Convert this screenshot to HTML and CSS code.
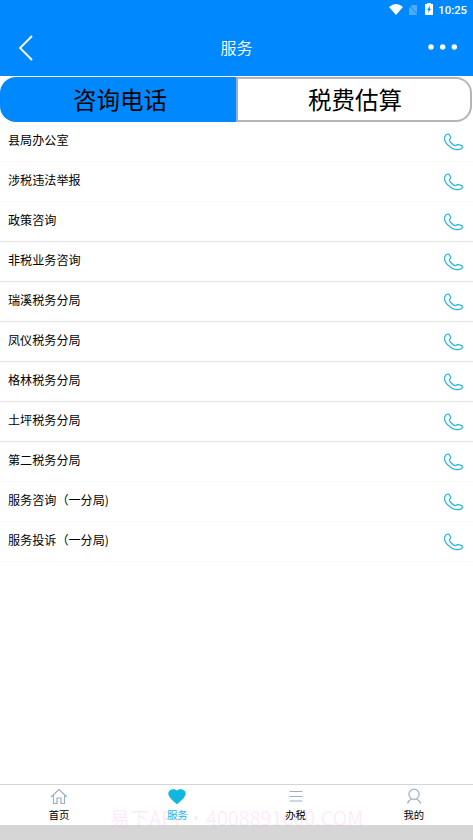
FILE: index.html
```html
<!DOCTYPE html>
<html lang="zh-CN">
<head>
<meta charset="utf-8">
<title>服务</title>
<link rel="stylesheet" href="styles.css">
</head>
<body>
<svg class="defs" width="0" height="0"><symbol id="phone" viewBox="0 0 20 18"><path d="M4.300 1.200C2.700 1.200 1 2.800 1 5.400C1 9.600 7.500 16.600 13.600 16.700C16.800 16.800 18.900 15.600 19.200 14.200C19.300 13.500 18.700 13 17.900 12.600L15.200 11.600C13.800 11.200 13.400 12 12.600 12.500C11.800 12.900 11 12.500 10.100 11.900C8.500 10.900 7.200 9.600 6.200 8.100C5.600 7.200 5.800 6.700 6.500 6.100C7.300 5.500 7.400 4.700 6.900 3.700L5.900 1.900C5.500 1.300 5 1.100 4.300 1.200Z"/></symbol></svg>
<header class="header">
  <div class="status">
    <svg class="wifi" viewBox="0 0 14 11"><path d="M0 3Q7-3 14 3L7 11Z"/></svg>
    <svg class="sim" viewBox="0 0 10 11"><path d="M4 1H9V11H1V4Z"/><path class="slash" d="M0 0L10 11"/></svg>
    <svg class="battery" viewBox="0 0 8 12"><path d="M0 1H2V0H6V1H8V12H0Z"/><path class="bolt" d="M5 2.500L2 7H3.600L3 10L6 5.800H4.500Z"/></svg>
    <span class="time">10:25</span>
  </div>
  <div class="titlebar">
    <svg class="back" viewBox="0 0 14 26"><path d="M13 1L1 13L13 25"/></svg>
    <h1>服务</h1>
    <svg class="more" viewBox="0 0 30 6"><circle cx="3" cy="3" r="2.700"/><circle cx="14.700" cy="3" r="2.700"/><circle cx="26.300" cy="3" r="2.700"/></svg>
  </div>
</header>
<nav class="segments"><div class="segment active">咨询电话</div><div class="segment">税费估算</div></nav>
<main class="list">
  <div class="row light"><span>县局办公室</span><svg><use href="#phone"/></svg></div>
  <div class="row light"><span>涉税违法举报</span><svg><use href="#phone"/></svg></div>
  <div class="row"><span>政策咨询</span><svg><use href="#phone"/></svg></div>
  <div class="row"><span>非税业务咨询</span><svg><use href="#phone"/></svg></div>
  <div class="row"><span>瑞溪税务分局</span><svg><use href="#phone"/></svg></div>
  <div class="row"><span>凤仪税务分局</span><svg><use href="#phone"/></svg></div>
  <div class="row"><span>格林税务分局</span><svg><use href="#phone"/></svg></div>
  <div class="row"><span>土坪税务分局</span><svg><use href="#phone"/></svg></div>
  <div class="row light"><span>第二税务分局</span><svg><use href="#phone"/></svg></div>
  <div class="row light"><span>服务咨询（一分局)</span><svg><use href="#phone"/></svg></div>
  <div class="row light"><span>服务投诉（一分局)</span><svg><use href="#phone"/></svg></div>
</main>
<footer class="tabs">
  <div class="watermark">易下APP・4008891600.COM</div>
  <div class="tab"><svg viewBox="0 0 18 18"><path d="M1 9L9 1.500L17 9M3.500 7.500V15.500H7V10H11V15.500H14.500V7.500"/></svg><span>首页</span></div>
  <div class="tab selected"><svg viewBox="0 0 18 18"><path d="M9 16.200C7 14.600 .5 9.800 .3 5.800C.1 1.500 6-.3 9 2.600C12-.3 17.900 1.500 17.700 5.800C17.500 9.800 11 14.600 9 16.200Z"/></svg><span>服务</span></div>
  <div class="tab"><svg viewBox="0 0 18 18"><path d="M2.500 3.500H15.500M2.500 8.500H15.500M2.500 13H15.500"/></svg><span>办税</span></div>
  <div class="tab"><svg viewBox="0 0 18 18"><circle cx="9" cy="6.300" r="5.100"/><path d="M2.500 15.500Q3.500 12.500 6.500 11M15.500 15.500Q14.500 12.500 11.500 11"/></svg><span>我的</span></div>
</footer>
<div class="bottom"></div>
</body>
</html>
```
FILE: styles.css
```css
* { box-sizing: border-box; }
body {
  margin: 0;
  height: 840px;
  display: flex;
  flex-direction: column;
  overflow: hidden;
  background: #fff;
  color: #000;
  font-family: "Noto Sans CJK SC", sans-serif;
}
svg { display: block; fill: none; }
.defs { position: absolute; }
.header { height: 76px; background: #0089ff; color: #fff; }
.status { height: 19px; padding-right: 6px; display: flex; justify-content: flex-end; align-items: center; }
.status svg { fill: #fff; }
.wifi { width: 14px; height: 11px; margin-right: 5px; }
.sim { width: 10px; height: 11px; margin-right: 7px; opacity: .3; }
.sim .slash { stroke: #0089ff; }
.battery { width: 8px; height: 12px; margin-right: 5px; margin-top: -1px; }
.battery .bolt { fill: #0089ff; }
.time { font: 500 11.3px/19px Roboto, sans-serif; margin-top: 1px; }
.titlebar { height: 57px; padding: 0 15px 0 19px; display: grid; grid-template-columns: 30px 1fr 34px; align-items: center; }
.back { width: 14px; height: 26px; stroke: #fff; stroke-width: 1.9; }
.more { width: 30px; height: 6px; margin-left: 4px; margin-top: -2px; fill: #fff; }
h1 { margin: -2px 0 0; font-size: 16px; line-height: 24px; font-weight: 350; text-align: center; }
.segments { height: 46px; margin-top: 1px; padding: 0 1px 1px 0; display: flex; }
.segment { width: 234px; padding-left: 2px; border: 2px solid #b5b5b9; border-left-width: 0; border-radius: 0 16px 16px 0; font-size: 23.500px; line-height: 41px; text-align: center; }
.segment.active { width: 238px; padding-left: 4px; background: #0089ff; border: 0; border-right: 2px solid #9aaec8; border-radius: 16px 0 0 16px; line-height: 45px; }
.list { flex: 1; margin-top: -1px; }
.row { height: 40px; padding: 0 9px 0 8px; border-bottom: 1px solid #e4e4e4; display: flex; align-items: center; justify-content: space-between; font-size: 12.100px; line-height: 18px; }
.row.light { border-color: #f8f8f8; }
.row span { margin-top: -3px; }
.row svg { width: 21px; height: 18px; margin-top: 0; stroke: #30b7dc; stroke-width: 1.3; }
.tabs { position: relative; height: 41px; border-top: 1px solid #d5d5d5; display: flex; }
.tab { position: relative; flex: 1; display: flex; flex-direction: column; align-items: center; padding-top: 3px; font-size: 10.300px; line-height: 18px; }
.tab svg { width: 18px; height: 18px; stroke: #9aafc3; stroke-width: 1.2; }
.tab.selected { color: #12b7e0; }
.tab.selected svg { fill: #12b7e0; stroke: none; }
.watermark { position: absolute; left: 110px; top: 19px; font-size: 19.700px; line-height: 27px; color: rgba(245, 120, 225, .16); white-space: nowrap; }
.bottom { height: 15px; background: #d6d6d6; }
```
